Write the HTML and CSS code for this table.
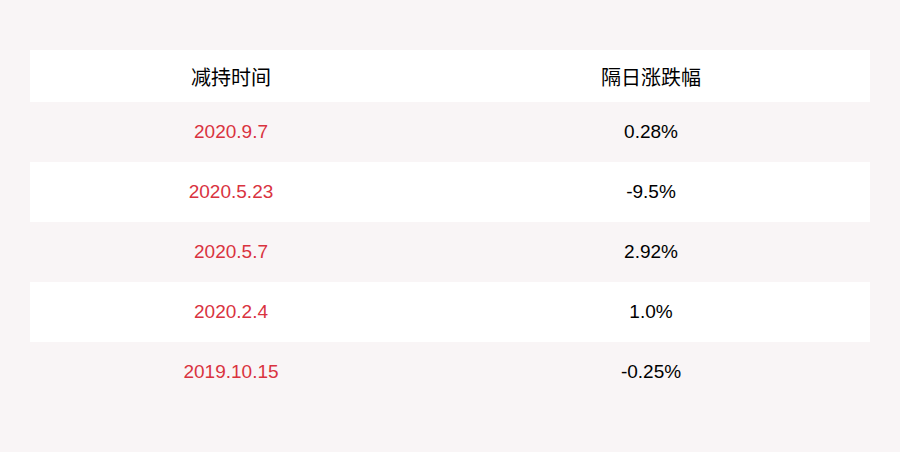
FILE: index.html
```html
<!DOCTYPE html>
<html lang="zh">
<head>
<meta charset="utf-8">
<link rel="stylesheet" href="styles.css">
</head>
<body>
<div class="page">
  <table class="tbl">
    <thead>
      <tr><th>减持时间</th><th>隔日涨跌幅</th></tr>
    </thead>
    <tbody>
      <tr class="odd"><td class="date">2020.9.7</td><td>0.28%</td></tr>
      <tr class="even"><td class="date">2020.5.23</td><td>-9.5%</td></tr>
      <tr class="odd"><td class="date">2020.5.7</td><td>2.92%</td></tr>
      <tr class="even"><td class="date">2020.2.4</td><td>1.0%</td></tr>
      <tr class="odd"><td class="date">2019.10.15</td><td>-0.25%</td></tr>
    </tbody>
  </table>
</div>
</body>
</html>
```
FILE: styles.css
```css
html, body {
  margin: 0;
  padding: 0;
  background: #f9f5f6;
}
.page {
  width: 900px;
  height: 452px;
  padding: 50px 30px 0 30px;
  box-sizing: border-box;
  font-family: "Liberation Sans", Arial, "Noto Sans CJK SC", sans-serif;
}
.tbl {
  width: 840px;
  border-collapse: collapse;
  table-layout: fixed;
}
.tbl th {
  height: 52px;
  padding: 0 18px 0 0;
  background: #ffffff;
  font-family: "Noto Sans CJK SC", sans-serif;
  font-weight: normal;
  font-size: 20px;
  color: #000;
  text-align: center;
  vertical-align: middle;
}
.tbl td {
  height: 60px;
  padding: 0 18px 0 0;
  font-size: 19px;
  color: #000;
  text-align: center;
  vertical-align: middle;
}
.tbl tr.odd td { background: #f9f5f6; }
.tbl tr.even td { background: #ffffff; }
.tbl td.date { color: #d9333f; }
```
